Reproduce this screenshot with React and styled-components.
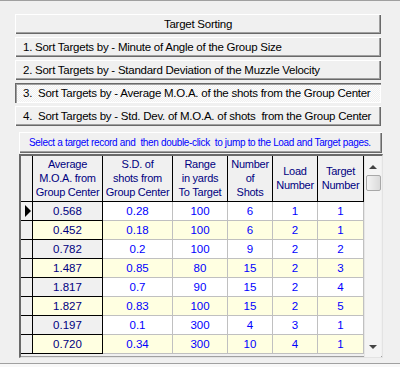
import styled, { createGlobalStyle } from 'styled-components'

const GlobalStyle = createGlobalStyle`
  body {
    margin: 0;
    background: #f0f0f0;
    font-family: "Liberation Sans", Arial, sans-serif;
  }
`

const Frame = styled.div`
  width: 400px;
  height: 367px;
  box-sizing: border-box;
  border-top: 1px solid #a0a0a0;
  background: #f0f0f0;
  display: flex;
  flex-direction: column;
  overflow: hidden;
`
const Buttons = styled.div`
  display: flex;
  flex-direction: column;
  gap: 3px;
  margin: 13px 0 0 15px;
  width: 366px;
`
const SortButton = styled.div`
  height: 20px;
  box-sizing: border-box;
  display: flex;
  align-items: center;
  justify-content: ${p => (p.$center ? 'center' : 'flex-start')};
  padding-left: ${p => (p.$center ? '0' : '8px')};
  font-size: 11.5px;
  letter-spacing: -0.25px;
  color: #000;
  white-space: pre;
  background: ${p => (p.$pressed
    ? 'repeating-conic-gradient(#f0f0f0 0 25%, #fcfcfc 0 50%) 0 0 / 2px 2px'
    : '#f0f0f0')};
  box-shadow: ${p => (p.$pressed
    ? 'inset 1px 1px 0 #696969, inset 2px 2px 0 #a0a0a0, inset -1px -1px 0 #ffffff'
    : 'inset 1px 1px 0 #ffffff, inset -1px -1px 0 #696969, inset -2px -2px 0 #a0a0a0')};
`
const Hint = styled.div`
  margin: 6px 0 0 19px;
  width: 363px;
  height: 21px;
  box-sizing: border-box;
  display: flex;
  align-items: center;
  padding-left: 10px;
  font-size: 10px;
  letter-spacing: -0.33px;
  color: #0000ff;
  white-space: pre;
  box-shadow: inset 1px 1px 0 #ffffff, inset -1px -1px 0 #696969, inset -2px -2px 0 #a0a0a0;
`
const GridFrame = styled.div`
  margin: 1px 0 0 19px;
  width: 364px;
  height: 204px;
  box-sizing: border-box;
  border-top: 2px solid #696969;
  border-left: 2px solid #696969;
  border-right: 1px solid #e3e3e3;
  border-bottom: 1px solid #e3e3e3;
  box-shadow: inset 0 -1px 0 #a0a0a0;
  display: flex;
  background: #f0f0f0;
`
const Table = styled.div`
  display: grid;
  grid-template-columns: 12px 70px 70px 55px 45px 45px 46px;
  grid-auto-rows: 19px;
  grid-template-rows: 46px;
  align-content: start;
`
const Cell = styled.div`
  box-sizing: border-box;
  display: flex;
  align-items: center;
  justify-content: center;
  text-align: center;
  font-size: 11.5px;
  border-right: 1px solid ${p => (p.$fixed ? '#000' : '#c0c0c0')};
  border-bottom: 1px solid ${p => (p.$fixed ? '#000' : '#c0c0c0')};
  background: ${p => p.$bg};
  color: ${p => (p.$fixed ? '#000080' : '#0000ff')};
`
const Head = styled(Cell)`
  background: #f0f0f0;
  color: #000080;
  font-size: 11px;
  border-right-color: #000;
  border-bottom-color: #000;
  line-height: 14px;
  letter-spacing: -0.25px;
  white-space: pre;
  padding-bottom: 1px;
`
const Arrow = styled.span`
  width: 0;
  height: 0;
  border-top: 6px solid transparent;
  border-bottom: 6px solid transparent;
  border-left: 6px solid #000;
  margin-left: 2px;
`
const Scroll = styled.div`
  width: 17px;
  display: flex;
  flex-direction: column;
  align-items: center;
  background: #f4f4f4;
  border-left: 1px solid #e6e6e6;
  box-sizing: border-box;
  padding-bottom: 4px;
`
const ScrollArrow = styled.span`
  width: 0;
  height: 0;
  margin-top: ${p => (p.$up ? '9px' : 'auto')};
  border-left: 4px solid transparent;
  border-right: 4px solid transparent;
  ${p => (p.$up ? 'border-bottom: 4px solid #444;' : 'border-top: 4px solid #444;')}
  margin-bottom: ${p => (p.$up ? '0' : '4px')};
`
const Thumb = styled.div`
  margin-top: 6px;
  width: 15px;
  height: 16px;
  box-sizing: border-box;
  border: 1px solid #a8a8a8;
  border-radius: 2px;
  background: linear-gradient(90deg, #f4f4f4, #dadada);
`
const Footer = styled.div`
  margin-top: auto;
  height: 3px;
  border-top: 1px solid #a0a0a0;
  background: #f8f8f8;
`

const rows = [
  ['0.568', '0.28', '100', '6', '1', '1'],
  ['0.452', '0.18', '100', '6', '2', '1'],
  ['0.782', '0.2', '100', '9', '2', '2'],
  ['1.487', '0.85', '80', '15', '2', '3'],
  ['1.817', '0.7', '90', '15', '2', '4'],
  ['1.827', '0.83', '100', '15', '2', '5'],
  ['0.197', '0.1', '300', '4', '3', '1'],
  ['0.720', '0.34', '300', '10', '4', '1'],
]

const headers = [
  'Average\nM.O.A. from\nGroup Center',
  'S.D. of\nshots from\nGroup Center',
  'Range\nin yards\nTo Target',
  'Number\nof\nShots',
  'Load\nNumber',
  'Target\nNumber',
]

export default function App() {
  return (
    <Frame>
      <GlobalStyle />
      <Buttons>
        <SortButton $center>Target Sorting</SortButton>
        <SortButton>1. Sort Targets by - Minute of Angle of the Group Size</SortButton>
        <SortButton>2. Sort Targets by - Standard Deviation of the Muzzle Velocity</SortButton>
        <SortButton $pressed>3.  Sort Targets by - Average M.O.A. of the shots from the Group Center</SortButton>
        <SortButton>4.  Sort Targets by - Std. Dev. of M.O.A. of shots  from the Group Center</SortButton>
      </Buttons>
      <Hint>Select a target record and  then double-click  to jump to the Load and Target pages.</Hint>
      <GridFrame>
        <Table>
          <Head />
          {headers.map(h => (
            <Head key={h}>{h}</Head>
          ))}
          {rows.map((r, i) => {
            const odd = i % 2 === 1
            return [
              <Cell key={'i' + i} $fixed $bg="#f0f0f0">{i === 0 && <Arrow />}</Cell>,
              ...r.map((v, j) => (
                <Cell
                  key={i + '-' + j}
                  $fixed={j === 0}
                  $bg={odd ? '#ffffe1' : j === 0 ? '#f0f0f0' : '#ffffff'}
                >
                  {v}
                </Cell>
              )),
            ]
          })}
        </Table>
        <Scroll>
          <ScrollArrow $up />
          <Thumb />
          <ScrollArrow />
        </Scroll>
      </GridFrame>
      <Footer />
    </Frame>
  )
}
